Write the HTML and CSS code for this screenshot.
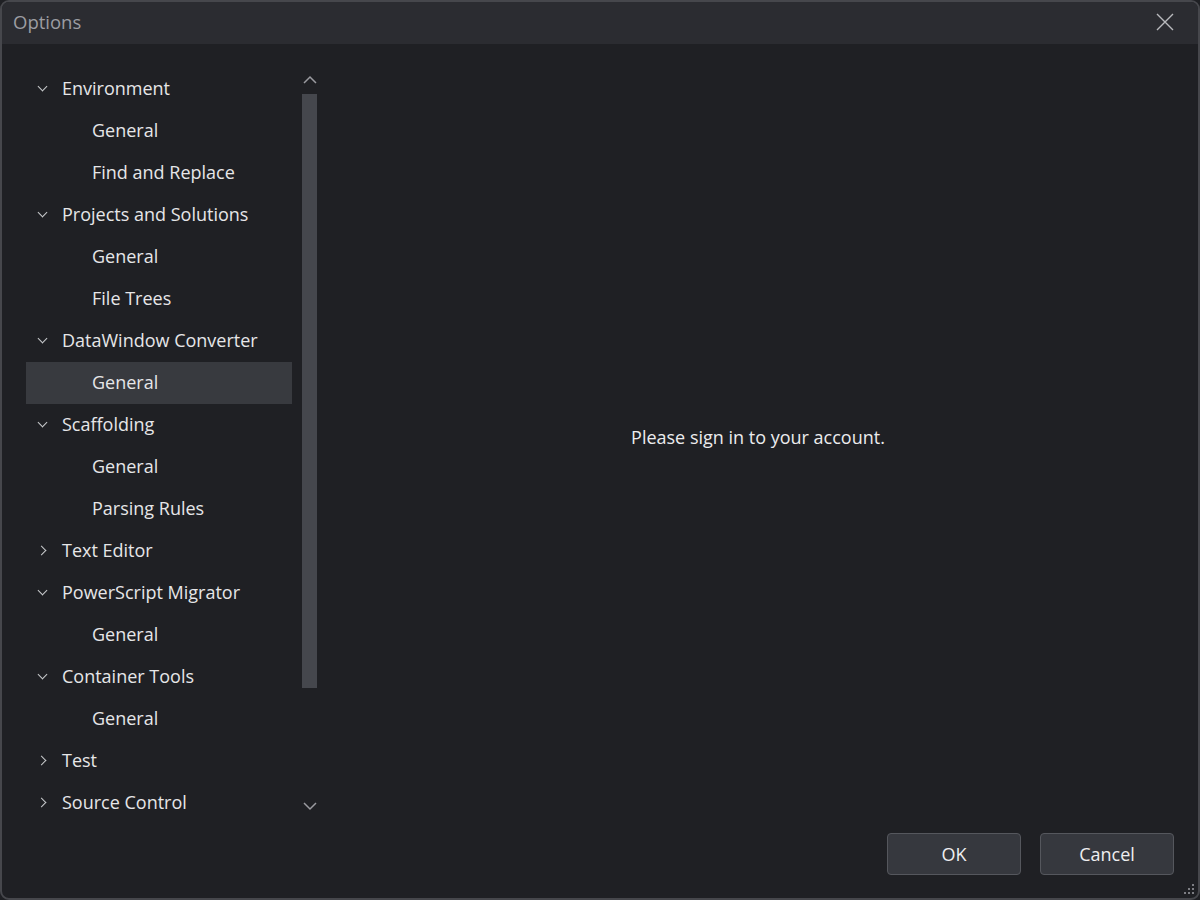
FILE: index.html
```html
<!DOCTYPE html>
<html lang="en">
<head>
  <meta charset="UTF-8" />
  <title>Options</title>
  <link rel="stylesheet" href="styles.css">
</head>
<body>
  <div class="window">
    <header class="titlebar">
      <span class="title">Options</span>
      <button class="close" aria-label="Close">
        <svg width="18" height="18" viewBox="0 0 18 18"><path d="M1 1L17 17M17 1L1 17" stroke="#b9babd" stroke-width="1.4" fill="none"/></svg>
      </button>
    </header>

    <div class="content">
      <aside class="sidebar">
        <ul class="tree">
          <li class="node open">Environment</li>
          <li class="leaf">General</li>
          <li class="leaf">Find and Replace</li>
          <li class="node open">Projects and Solutions</li>
          <li class="leaf">General</li>
          <li class="leaf">File Trees</li>
          <li class="node open">DataWindow Converter</li>
          <li class="leaf selected">General</li>
          <li class="node open">Scaffolding</li>
          <li class="leaf">General</li>
          <li class="leaf">Parsing Rules</li>
          <li class="node">Text Editor</li>
          <li class="node open">PowerScript Migrator</li>
          <li class="leaf">General</li>
          <li class="node open">Container Tools</li>
          <li class="leaf">General</li>
          <li class="node">Test</li>
          <li class="node">Source Control</li>
        </ul>
        <div class="scrollbar">
          <svg class="arrow up" width="16" height="10" viewBox="0 0 16 10"><path d="M2 8L8 2L14 8" stroke="#9a9ba0" stroke-width="1.5" fill="none"/></svg>
          <div class="track"><div class="thumb"></div></div>
          <svg class="arrow" width="16" height="10" viewBox="0 0 16 10"><path d="M2 2L8 8L14 2" stroke="#9a9ba0" stroke-width="1.5" fill="none"/></svg>
        </div>
      </aside>

      <main class="panel">
        <p class="message">Please sign in to your account.</p>
      </main>
    </div>

    <footer class="actions">
      <button class="btn">OK</button>
      <button class="btn">Cancel</button>
      <svg class="grip" width="14" height="14" viewBox="0 0 14 14" fill="#7d7e83">
        <rect x="10" y="2" width="2" height="2"/>
        <rect x="6" y="6" width="2" height="2"/><rect x="10" y="6" width="2" height="2"/>
        <rect x="2" y="10" width="2" height="2"/><rect x="6" y="10" width="2" height="2"/><rect x="10" y="10" width="2" height="2"/>
      </svg>
    </footer>
  </div>
</body>
</html>
```

FILE: styles.css
```css
html, body {
  margin: 0;
  height: 100%;
  background: #1f2024;
}
body {
  font-family: "Open Sans", "Noto Sans", sans-serif;
  color: #e6e6e8;
}
.window {
  box-sizing: border-box;
  width: 1200px;
  height: 900px;
  border: 2px solid #46474c;
  border-radius: 9px;
  background: #1f2024;
  display: flex;
  flex-direction: column;
  overflow: hidden;
}
.titlebar {
  height: 42px;
  flex: none;
  background: #2b2c31;
  display: flex;
  align-items: center;
  justify-content: space-between;
  padding-left: 11px;
}
.title {
  font-size: 18.5px;
  color: #9c9da2;
  margin-bottom: 3px;
}
.close {
  background: none;
  border: none;
  width: 58px;
  height: 42px;
  display: flex;
  align-items: center;
  justify-content: center;
  padding: 0 0 2px;
  margin-right: 4px;
}
.content {
  flex: 1;
  display: flex;
  min-height: 0;
}
.sidebar {
  display: flex;
  padding: 24px 0 0 24px;
}
.tree {
  list-style: none;
  margin: 0;
  padding: 0;
  width: 266px;
}
.tree li {
  height: 42px;
  line-height: 41px;
  font-size: 18px;
  white-space: nowrap;
  position: relative;
}
.node {
  padding-left: 36px;
}
.leaf {
  padding-left: 66px;
}
.node::before {
  content: "";
  position: absolute;
  left: 12px;
  top: 17px;
  width: 6px;
  height: 6px;
  border-right: 1.5px solid #c9cacd;
  border-bottom: 1.5px solid #c9cacd;
  transform: rotate(-45deg);
}
.node.open::before {
  left: 13px;
  top: 15px;
  transform: rotate(45deg);
}
.selected {
  background: #383a3f;
}
.scrollbar {
  width: 16px;
  margin-left: 10px;
  display: flex;
  flex-direction: column;
  align-items: center;
}
.arrow {
  flex: none;
  margin: 6px 0;
}
.arrow.up {
  margin: 7px 0 9px;
}
.track {
  width: 16px;
  height: 701px;
}
.thumb {
  width: 15px;
  height: 594px;
  background: #45474d;
}
.panel {
  flex: 1;
  display: flex;
  justify-content: center;
  padding-top: 381px;
}
.message {
  margin: 0;
  font-size: 18px;
  color: #ececee;
}
.actions {
  flex: none;
  height: 65px;
  display: flex;
  justify-content: flex-end;
  align-items: flex-start;
  gap: 19px;
  padding-right: 24px;
  position: relative;
}
.btn {
  width: 134px;
  height: 42px;
  background: #36383e;
  border: 1px solid #55575d;
  border-radius: 4px;
  color: #eeeef0;
  font-family: inherit;
  font-size: 18px;
}
.grip {
  position: absolute;
  right: 2px;
  bottom: 2px;
}
```
